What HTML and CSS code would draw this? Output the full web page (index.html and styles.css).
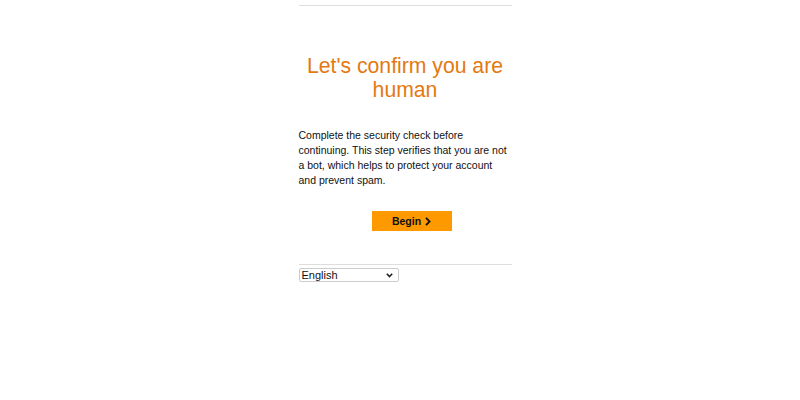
FILE: index.html
```html
<!DOCTYPE html>
<html lang="en">
<head>
  <meta charset="UTF-8" />
  <meta name="viewport" content="width=device-width, initial-scale=1.0"/>
  <title>Let's confirm you are human</title>
  <link rel="stylesheet" href="styles.css">
</head>
<body>
  <div class="page">
    <div class="box">
      <!-- Challenge -->
      <div class="challenge">
        <h1>Let's confirm you are human</h1>
        <p>Complete the security check before continuing. This step verifies that you are not a bot, which helps to protect your account and prevent spam.</p>
        <div class="actions">
          <button class="begin" type="button">Begin
            <svg width="6" height="9" viewBox="0 0 6 9"><path d="M1 0.8 L4.6 4.5 L1 8.2" fill="none" stroke="#111" stroke-width="1.8"/></svg>
          </button>
        </div>
      </div>

      <!-- Language picker -->
      <div class="footer">
        <div class="lang-wrap">
          <select class="lang">
            <option>English</option>
          </select>
          <svg class="lang-arrow" width="7" height="5" viewBox="0 0 7 5"><path d="M0.8 0.8 L3.5 3.6 L6.2 0.8" fill="none" stroke="#222" stroke-width="1.6"/></svg>
        </div>
      </div>
    </div>
  </div>
</body>
</html>
```

FILE: styles.css
```css
/* Reset & base styles */
* {
  margin: 0;
  padding: 0;
  box-sizing: border-box;
}
html, body {
  background: #fff;
  font-family: Arial, "Liberation Sans", sans-serif;
  color: #111;
}

.page {
  display: flex;
  justify-content: center;
  padding: 5px 0 0 10px;
}
.box {
  width: 213px;
}

/* Challenge */
.challenge {
  border-top: 1px solid #ddd;
  padding-top: 48px;
}
.challenge h1 {
  color: #e47911;
  font-weight: normal;
  font-size: 21.2px;
  line-height: 24px;
  text-align: center;
}
.challenge p {
  margin-top: 26px;
  font-size: 10.5px;
  line-height: 15px;
}
.actions {
  display: flex;
  justify-content: center;
  margin-top: 23px;
  padding-left: 13px;
}
.begin {
  display: flex;
  align-items: center;
  justify-content: center;
  gap: 4px;
  width: 80px;
  height: 20px;
  border: none;
  background: #ff9900;
  font-family: inherit;
  font-weight: bold;
  font-size: 10.5px;
  color: #111;
}

/* Footer */
.footer {
  margin-top: 33px;
  border-top: 1px solid #ddd;
  padding-top: 3px;
}
.lang-wrap {
  position: relative;
  width: 100px;
}
.lang {
  display: block;
  appearance: none;
  -webkit-appearance: none;
  width: 100px;
  height: 14px;
  padding: 0 0 0 2px;
  font-family: inherit;
  font-size: 11px;
  line-height: 12px;
  border: 1px solid #ccc;
  border-radius: 2px;
  background: #fff;
  color: #111;
}
.lang-arrow {
  position: absolute;
  right: 6px;
  top: 5px;
  pointer-events: none;
}
```
